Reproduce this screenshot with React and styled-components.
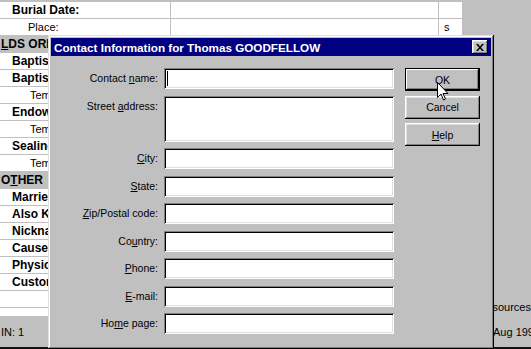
import React from "react";
import styled, { createGlobalStyle } from "styled-components";

const GlobalStyle = createGlobalStyle`
  html, body {
    margin: 0;
    padding: 0;
    background: #c0c0c0;
  }
  body {
    font-family: "Liberation Sans", Arial, sans-serif;
    color: #000;
  }
`;

const Screen = styled.div`
  position: relative;
  width: 531px;
  height: 349px;
  overflow: hidden;
  display: flex;
  flex-direction: column;
  background: #c0c0c0;
`;

const Main = styled.div`
  display: flex;
  height: 316px;
  flex-shrink: 0;
`;

// the family record grid behind the dialog
const Grid = styled.div`
  width: 464px;
  margin-top: 1px;
  border-top: 1px solid #c0c0c0;
  background: #fff;
  overflow: hidden;
`;

const Row = styled.div`
  display: grid;
  grid-template-columns: 171px 268px 25px;
  height: 17px;
  background: ${p => (p.$header ? "#c0c0c0" : "#fff")};
`;

const Cell = styled.div`
  box-sizing: border-box;
  border-right: 1px solid #c0c0c0;
  border-bottom: 1px solid #c0c0c0;
  padding-left: ${p => p.$indent || 0}px;
  font-size: ${p => (p.$bold ? "12px" : "11px")};
  font-weight: ${p => (p.$bold ? "bold" : "normal")};
  line-height: 16px;
  white-space: nowrap;
  overflow: hidden;
`;

const SidePanel = styled.div`
  flex: 1;
  display: flex;
  align-items: flex-end;
  padding: 0 0 2px 30px;
  font-size: 11px;
  line-height: 13px;
  white-space: nowrap;
`;

const StatusBar = styled.div`
  flex: 1;
  display: grid;
  grid-template-columns: 492px 1fr;
  align-items: center;
  font-size: 11px;
  padding-left: 1px;
  white-space: nowrap;
`;

const BottomEdge = styled.div`
  height: 2px;
  background: #111;
`;

// dialog
const Dialog = styled.div`
  position: absolute;
  left: 48px;
  top: 35px;
  width: 446px;
  height: 314px;
  box-sizing: border-box;
  padding: 3px;
  background: #c0c0c0;
  box-shadow: inset -1px -1px #000, inset 1px 1px #dfdfdf,
    inset -2px -2px #808080, inset 2px 2px #fff;
  display: flex;
  flex-direction: column;
`;

const TitleBar = styled.div`
  height: 18px;
  background: #000080;
  color: #fff;
  display: flex;
  align-items: center;
  justify-content: space-between;
  padding: 0 3px 0 3px;
`;

const TitleText = styled.div`
  font-size: 11.7px;
  font-weight: bold;
  white-space: nowrap;
`;

const CloseBtn = styled.div`
  width: 16px;
  height: 14px;
  background: #c0c0c0;
  box-shadow: inset -1px -1px #000, inset 1px 1px #fff,
    inset -2px -2px #808080, inset 2px 2px #dfdfdf;
  display: flex;
  align-items: center;
  justify-content: center;
`;

const Body = styled.div`
  display: flex;
  gap: 11px;
  padding-top: 12px;
`;

const Form = styled.div`
  display: grid;
  grid-template-columns: 107px 230px;
  column-gap: 6px;
  row-gap: 6.5px;
  align-items: start;
`;

const Label = styled.div`
  text-align: right;
  font-size: 10.5px;
  line-height: 21px;
  white-space: nowrap;
`;

const Key = styled.span`
  text-decoration: underline;
`;

const Field = styled.div`
  position: relative;
  height: ${p => (p.$tall ? 46 : 21)}px;
  background: #fff;
  box-shadow: inset 1px 1px #808080, inset -1px -1px #fff,
    inset 2px 2px #000, inset -2px -2px #dfdfdf;
`;

const Caret = styled.div`
  position: absolute;
  left: 3px;
  top: 3px;
  width: 1px;
  height: 15px;
  background: #000;
`;

const Buttons = styled.div`
  display: flex;
  flex-direction: column;
  gap: 4.5px;
  width: 75px;
`;

const Button = styled.div`
  height: 23px;
  display: flex;
  align-items: center;
  justify-content: center;
  background: #c0c0c0;
  font-size: 10.5px;
  box-shadow: ${p =>
    p.$default
      ? "inset 0 0 0 1px #000, inset -2px -2px #000, inset 2px 2px #fff, inset -3px -3px #808080"
      : "inset -1px -1px #000, inset 1px 1px #fff, inset -2px -2px #808080, inset 2px 2px #dfdfdf"};
`;

const Pointer = styled.svg`
  position: absolute;
  left: 437px;
  top: 82px;
`;

const rows = [
  { text: "Burial Date:", bold: true, indent: 12 },
  { text: "Place:", indent: 28, mark: "s" },
  { header: true, key: "L", text: "DS ORDINANCES" },
  { text: "Baptism:", bold: true, indent: 12 },
  { text: "Baptism:", bold: true, indent: 12 },
  { text: "Temple:", indent: 30 },
  { text: "Endowment:", bold: true, indent: 12 },
  { text: "Temple:", indent: 30 },
  { text: "Sealing:", bold: true, indent: 12 },
  { text: "Temple:", indent: 30 },
  { header: true, pre: "O", key: "T", text: "HER" },
  { text: "Married Name:", bold: true, indent: 12 },
  { text: "Also Known As:", bold: true, indent: 12 },
  { text: "Nickname:", bold: true, indent: 12 },
  { text: "Cause of Death:", bold: true, indent: 12 },
  { text: "Physical Description:", bold: true, indent: 12 },
  { text: "Custom ID:", bold: true, indent: 12 },
  { text: "" },
  { text: "" }
];

const fields = [
  { pre: "Contact ", key: "n", post: "ame:", caret: true },
  { pre: "Street ", key: "a", post: "ddress:", tall: true },
  { pre: "", key: "C", post: "ity:" },
  { pre: "", key: "S", post: "tate:" },
  { pre: "", key: "Z", post: "ip/Postal code:" },
  { pre: "Co", key: "u", post: "ntry:" },
  { pre: "", key: "P", post: "hone:" },
  { pre: "", key: "E", post: "-mail:" },
  { pre: "Ho", key: "m", post: "e page:" }
];

const App = () => {
  return (
    <Screen>
      <GlobalStyle />
      <Main>
        <Grid>
          {rows.map((r, i) => (
            <Row key={i} $header={r.header}>
              {r.header ? (
                <Cell $bold $indent={1}>
                  {r.pre}
                  <Key>{r.key}</Key>
                  {r.text}
                </Cell>
              ) : (
                <Cell $bold={r.bold} $indent={r.indent}>
                  {r.text}
                </Cell>
              )}
              <Cell />
              <Cell $indent={5}>{r.mark}</Cell>
            </Row>
          ))}
        </Grid>
        <SidePanel>sources</SidePanel>
      </Main>
      <StatusBar>
        <span>IN: 1</span>
        <span>Aug 1999</span>
      </StatusBar>
      <BottomEdge />

      <Dialog>
        <TitleBar>
          <TitleText>Contact Information for Thomas GOODFELLOW</TitleText>
          <CloseBtn>
            <svg width="8" height="7" viewBox="0 0 8 7">
              <path d="M0 0h2l2 2.5L6 0h2L5 3.5 8 7H6L4 4.5 2 7H0l3-3.5z" fill="#000" />
            </svg>
          </CloseBtn>
        </TitleBar>
        <Body>
          <Form>
            {fields.map((f, i) => (
              <React.Fragment key={i}>
                <Label>
                  {f.pre}
                  <Key>{f.key}</Key>
                  {f.post}
                </Label>
                <Field $tall={f.tall}>{f.caret && <Caret />}</Field>
              </React.Fragment>
            ))}
          </Form>
          <Buttons>
            <Button $default>OK</Button>
            <Button>Cancel</Button>
            <Button>
              <Key>H</Key>elp
            </Button>
          </Buttons>
        </Body>
      </Dialog>

      <Pointer width="12" height="19" viewBox="0 0 12 19">
        <path
          d="M0.5 0.5v15l3.5-3.5 2.5 6 2-1-2.5-5.5h5z"
          fill="#fff"
          stroke="#000"
          strokeWidth="1"
        />
      </Pointer>
    </Screen>
  );
};

export default App;
